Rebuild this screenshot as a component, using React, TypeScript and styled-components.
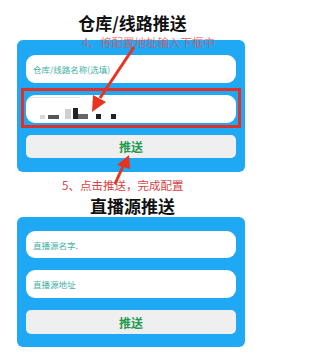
import React from 'react';
import styled, { createGlobalStyle } from 'styled-components';

const GlobalStyle = createGlobalStyle`
  html, body { margin: 0; padding: 0; background: #fff; }
  body { font-family: "Noto Sans CJK SC", "Noto Sans", sans-serif; }
`;

const Page = styled.div`
  position: relative;
  width: 265px;
  height: 353px;
  overflow: hidden;
  background: #fff;
`;

const Title = styled.div<{ $top: number; $bottom: number }>`
  padding: ${(p) => p.$top}px 0 ${(p) => p.$bottom}px;
  height: 18px;
  line-height: 18px;
  text-align: center;
  font-size: 17px;
  font-weight: 700;
  color: #111;
`;

const Card = styled.div<{ $pt: number; $pb: number }>`
  margin: 0 20px 0 17px;
  padding: ${(p) => p.$pt}px 9px ${(p) => p.$pb}px;
  background: #1fa8f4;
  border-radius: 6px;
  display: flex;
  flex-direction: column;
  gap: 12px;
`;

const Field = styled.div<{ $h: number }>`
  position: relative;
  height: ${(p) => p.$h}px;
  background: #fff;
  border-radius: 9px;
  display: flex;
  align-items: center;
  padding: 0 7px;
  font-size: 8.5px;
  color: #3fb0a6;
`;

const Highlight = styled.div`
  position: absolute;
  top: -7px;
  bottom: -5px;
  left: -5px;
  right: -5px;
  border: 3px solid #e0302a;
  pointer-events: none;
`;

const FaintLine = styled.div`
  position: absolute;
  top: 2px;
  left: 4px;
  width: 50px;
  height: 1px;
  background: #e4e4e4;
`;

const Mosaic = styled.div`
  display: flex;
  align-items: flex-end;
  margin-top: 8px;
  margin-left: 7px;
`;

const Block = styled.span<{ $w: number; $h: number; $c: string; $ml: number }>`
  display: inline-block;
  width: ${(p) => p.$w}px;
  height: ${(p) => p.$h}px;
  margin-left: ${(p) => p.$ml}px;
  background: ${(p) => p.$c};
`;

const PushButton = styled.div<{ $h: number }>`
  height: ${(p) => p.$h}px;
  background: #efefef;
  border-radius: 5px;
  display: flex;
  align-items: center;
  justify-content: center;
  font-size: 12px;
  font-weight: 700;
  color: #1f9a4f;
`;

const Note = styled.div<{ $x: number; $y: number; $c: string }>`
  position: absolute;
  left: ${(p) => p.$x}px;
  top: ${(p) => p.$y}px;
  font-size: 11.5px;
  line-height: 13px;
  color: ${(p) => p.$c};
  white-space: nowrap;
`;

const Arrows = styled.svg`
  position: absolute;
  left: 0;
  top: 0;
  width: 265px;
  height: 353px;
  pointer-events: none;
`;

const mosaic = [
  { w: 5, h: 4, c: '#d6d6d6', ml: 0 },
  { w: 11, h: 4, c: '#555', ml: 3 },
  { w: 6, h: 10, c: '#cfcfcf', ml: 6 },
  { w: 5, h: 11, c: '#222', ml: 2 },
  { w: 10, h: 5, c: '#666', ml: 0 },
  { w: 5, h: 5, c: '#222', ml: 8 },
  { w: 5, h: 5, c: '#222', ml: 10 },
];

export default function App() {
  return (
    <Page>
      <GlobalStyle />
      <Title $top={14} $bottom={8}>仓库/线路推送</Title>
      <Card $pt={15} $pb={14}>
        <Field $h={28}>仓库/线路名称(选填)</Field>
        <Field $h={28}>
          <FaintLine />
          <Mosaic>
            {mosaic.map((b, i) => (
              <Block key={i} $w={b.w} $h={b.h} $c={b.c} $ml={b.ml} />
            ))}
          </Mosaic>
          <Highlight />
        </Field>
        <PushButton $h={23}>推送</PushButton>
      </Card>

      <Title $top={25} $bottom={2}>直播源推送</Title>
      <Card $pt={14} $pb={13}>
        <Field $h={27}>直播源名字.</Field>
        <Field $h={28}>直播源地址</Field>
        <PushButton $h={24}>推送</PushButton>
      </Card>

      <Note $x={82} $y={36} $c="rgba(224, 80, 80, 0.75)">4、将配置地址输入下框中</Note>
      <Note $x={62} $y={179} $c="#d64545">5、点击推送，完成配置</Note>

      <Arrows viewBox="0 0 265 353">
        <line x1="134" y1="47" x2="100" y2="98" stroke="#e8331f" strokeWidth="3" />
        <polygon points="92,112 93,95 106,102" fill="#e8331f" />
        <line x1="115" y1="184" x2="124" y2="164" stroke="#e8331f" strokeWidth="3" />
        <polygon points="129,155 117,165 130,169" fill="#e8331f" />
      </Arrows>
    </Page>
  );
}
